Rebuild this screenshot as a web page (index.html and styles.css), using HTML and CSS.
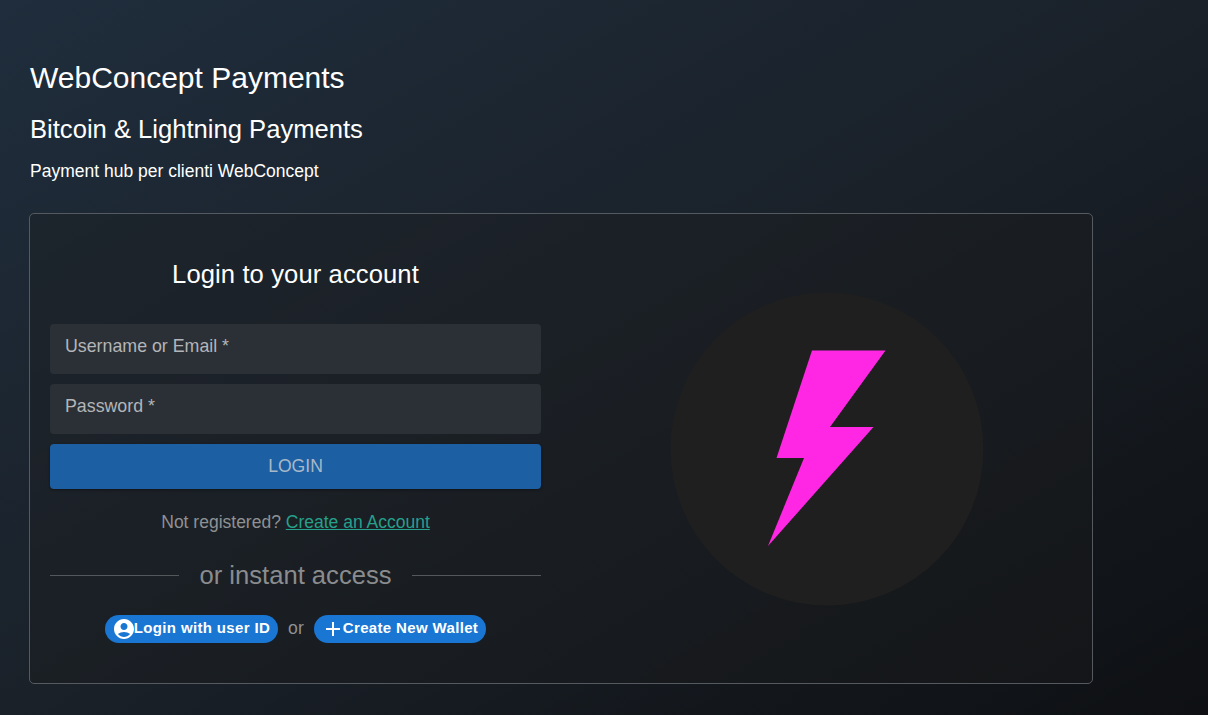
FILE: index.html
```html
<!DOCTYPE html>
<html lang="en">
<head>
<meta charset="utf-8">
<title>WebConcept Payments</title>
<link rel="stylesheet" href="styles.css">
</head>
<body>
<main class="page">
  <header class="intro">
    <h1 class="site-title">WebConcept Payments</h1>
    <h2 class="site-subtitle">Bitcoin &amp; Lightning Payments</h2>
    <p class="site-tagline">Payment hub per clienti WebConcept</p>
  </header>
  <section class="card">
    <form class="login">
      <h3 class="login-title">Login to your account</h3>
      <div class="field">Username or Email *</div>
      <div class="field">Password *</div>
      <button class="submit" type="button">LOGIN</button>
      <p class="register">Not registered? <a class="register-link" href="#">Create an Account</a></p>
      <div class="divider"><span class="divider-line"></span><span class="divider-text">or instant access</span><span class="divider-line"></span></div>
      <div class="instant">
        <button class="chip" type="button">
          <svg class="chip-icon" viewBox="0 0 24 24"><path fill="#fff" d="M12 2C6.48 2 2 6.48 2 12s4.48 10 10 10 10-4.48 10-10S17.52 2 12 2zm0 4c1.93 0 3.5 1.57 3.5 3.5S13.93 13 12 13s-3.5-1.57-3.5-3.5S10.07 6 12 6zm0 14c-2.03 0-4.43-.82-6.14-2.88C7.55 15.8 9.68 15 12 15s4.45.8 6.14 2.12C16.43 19.18 14.03 20 12 20z"/></svg>
          <span>Login with user ID</span>
        </button>
        <span class="instant-or">or</span>
        <button class="chip" type="button">
          <svg class="chip-icon" viewBox="0 0 24 24"><path fill="#fff" d="M19 13h-6v6h-2v-6H5v-2h6V5h2v6h6v2z"/></svg>
          <span>Create New Wallet</span>
        </button>
      </div>
    </form>
    <div class="art">
      <svg class="logo" viewBox="0 0 314 314">
        <circle cx="157" cy="157" r="156.500" fill="#1f1f1f"/>
        <polygon fill="#ff26e4" points="142,58.5 215.500,58.500 160,135 203.500,135 98,254 134,166 106.500,166"/>
      </svg>
    </div>
  </section>
</main>
</body>
</html>
```
FILE: styles.css
```css
* { box-sizing: border-box; }
html, body { height: 100%; }
body {
  margin: 0;
  min-height: 715px;
  background: linear-gradient(to bottom right, #1f2d3c, #1a2129 50%, #0e1013);
  color: #fff;
  font-family: "Liberation Sans", Arial, sans-serif;
  overflow: hidden;
}
.page { padding: 60px 0 0 29px; width: 1093px; }
.intro { padding-left: 1px; }
.site-title { margin: 0 0 18px; font-size: 30px; line-height: 36px; font-weight: 400; }
.site-subtitle { margin: 0 0 17px; font-size: 25.6px; line-height: 30px; font-weight: 400; }
.site-tagline { margin: 0 0 32px; font-size: 17.5px; line-height: 20px; }
.card {
  display: grid;
  grid-template-columns: 1fr 1fr;
  gap: 40px;
  height: 471px;
  padding: 20px;
  border: 1px solid #555a60;
  border-radius: 5px;
  background: rgba(30,30,30,.35);
}
.login { display: flex; flex-direction: column; }
.login-title { margin: 26px 0 36px; font-size: 25.6px; line-height: 28px; font-weight: 400; letter-spacing: .1px; text-align: center; }
.field {
  height: 50px;
  margin-bottom: 10px;
  padding: 12px 15px;
  border-radius: 4px;
  background: #2b3036;
  color: #b3b5b8;
  font-size: 17.8px;
  line-height: 20px;
}
.submit {
  height: 45px;
  padding: 0 0 1px;
  border: 0;
  border-radius: 4px;
  background: #1c5fa3;
  color: #a9b8c8;
  font: 17.6px/20px "Liberation Sans", Arial, sans-serif;
  box-shadow: 0 1px 3px rgba(0,0,0,.4);
}
.register { margin: 23px 0 0; color: #8f9193; font-size: 17.5px; line-height: 21px; text-align: center; }
.register-link { color: #26a08c; }
.divider { display: flex; align-items: center; gap: 20px; margin-top: 28px; }
.divider-line { flex: 1; height: 1px; background: #54585c; }
.divider-text { color: #8a8c8e; font-size: 25.6px; line-height: 28px; }
.instant { display: flex; justify-content: center; align-items: center; margin-top: 26px; }
.instant-or { margin: -3px 10px 0; color: #8f9193; font-size: 17.6px; line-height: 20px; }
.chip {
  display: flex;
  align-items: center;
  height: 28px;
  padding: 0 8px 2px 7px;
  border: 0;
  border-radius: 14px;
  background: #1976d2;
  color: #fff;
  font: 700 15px/18px "Liberation Sans", Arial, sans-serif;
  letter-spacing: .35px;
}
.chip-icon { width: 24px; height: 24px; flex: none; margin: 2px -2px 0 0; }
.art { display: flex; justify-content: center; align-items: center; }
.logo { width: 314px; height: 314px; margin-top: 1px; }
```
